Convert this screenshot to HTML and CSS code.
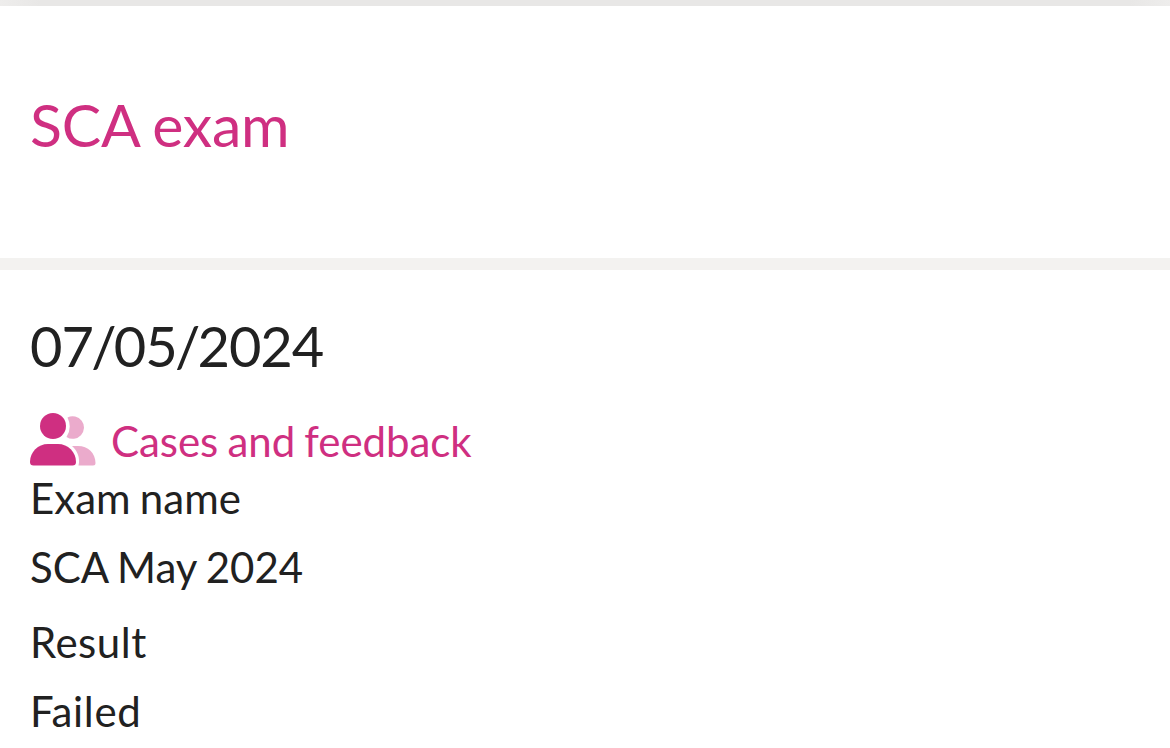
FILE: index.html
```html
<!DOCTYPE html>
<html lang="en">
<head>
    <meta charset="UTF-8">
    <meta name="viewport" content="width=device-width, initial-scale=1.0">
    <title>SCA exam</title>
    <link rel="stylesheet" href="styles.css">
</head>
<body>
    <div class="top-line"></div>
    <header class="exam-header">
        <h1>SCA exam</h1>
    </header>
    <main class="exam-content">
        <h2>07<span class="slash">/</span>05<span class="slash">/</span>2024</h2>
        <a class="feedback-link" href="#">
            <svg class="feedback-icon" viewBox="0 0 66 53" aria-hidden="true">
                <g class="icon-back">
                    <path d="M37.500 4.500A11.300 11.300 0 1 1 36.500 24A20 20 0 0 0 37.500 4.500Z"/>
                    <path d="M42 33H48C58 33 65.500 40 65.500 50Q65.500 52.500 63 52.500H48.500C50.500 45 47 37 42 33Z"/>
                </g>
                <circle cx="23" cy="13" r="13"/>
                <path d="M18 31H28C38 31 46 39 46 49Q46 52.500 42.500 52.500H3.500Q0 52.500 0 49C0 39 8 31 18 31Z"/>
            </svg>
            <span>Cases and feedback</span>
        </a>
        <dl class="exam-list">
            <dt>Exam name</dt>
            <dd>SCA May 2024</dd>
            <dt class="result">Result</dt>
            <dd class="result">Failed</dd>
        </dl>
    </main>
</body>
</html>
```
FILE: styles.css
```css
*{
    margin: 0;
    padding: 0;
    box-sizing: border-box;
}
body{
    height: 748px;
    overflow: hidden;
    background-color: #fff;
    color: #212121;
    font-family: Lato, sans-serif;
    font-size: 42px;
    word-spacing: -1.5px;
}
.top-line{
    height: 6px;
    background: linear-gradient(90deg, #eeedec, #e8e7e6 40px, #e8e7e6 1130px, #eeedec);
}
.exam-header{
    height: 264px;
    padding: 83px 30px 0;
    border-bottom: 12px solid #f3f2f0;
}
.exam-header h1{
    color: #cf2f81;
    font-size: 59px;
    font-weight: 400;
    line-height: 72px;
    letter-spacing: -.2px;
}
.exam-content{
    padding: 42px 30px 0;
}
.exam-content h2{
    font-size: 56px;
    font-weight: 400;
    line-height: 68px;
    letter-spacing: -1.1px;
}
.slash{
    margin: 0 -1.6px;
}
.feedback-link{
    display: flex;
    height: 60px;
    margin-top: 31px;
    color: #cf2f81;
    line-height: 60px;
    text-decoration: none;
    letter-spacing: -.05px;
}
.feedback-icon{
    width: 66px;
    height: 53px;
    margin: 2px 15px 0 0;
    fill: currentColor;
}
.icon-back{
    opacity: .4;
}
.exam-list dt{
    height: 60px;
    line-height: 54px;
}
.exam-list dd{
    height: 84px;
    line-height: 72px;
}
.exam-list .result{
    letter-spacing: .5px;
}
.exam-list dd.result{
    letter-spacing: .7px;
}
```
